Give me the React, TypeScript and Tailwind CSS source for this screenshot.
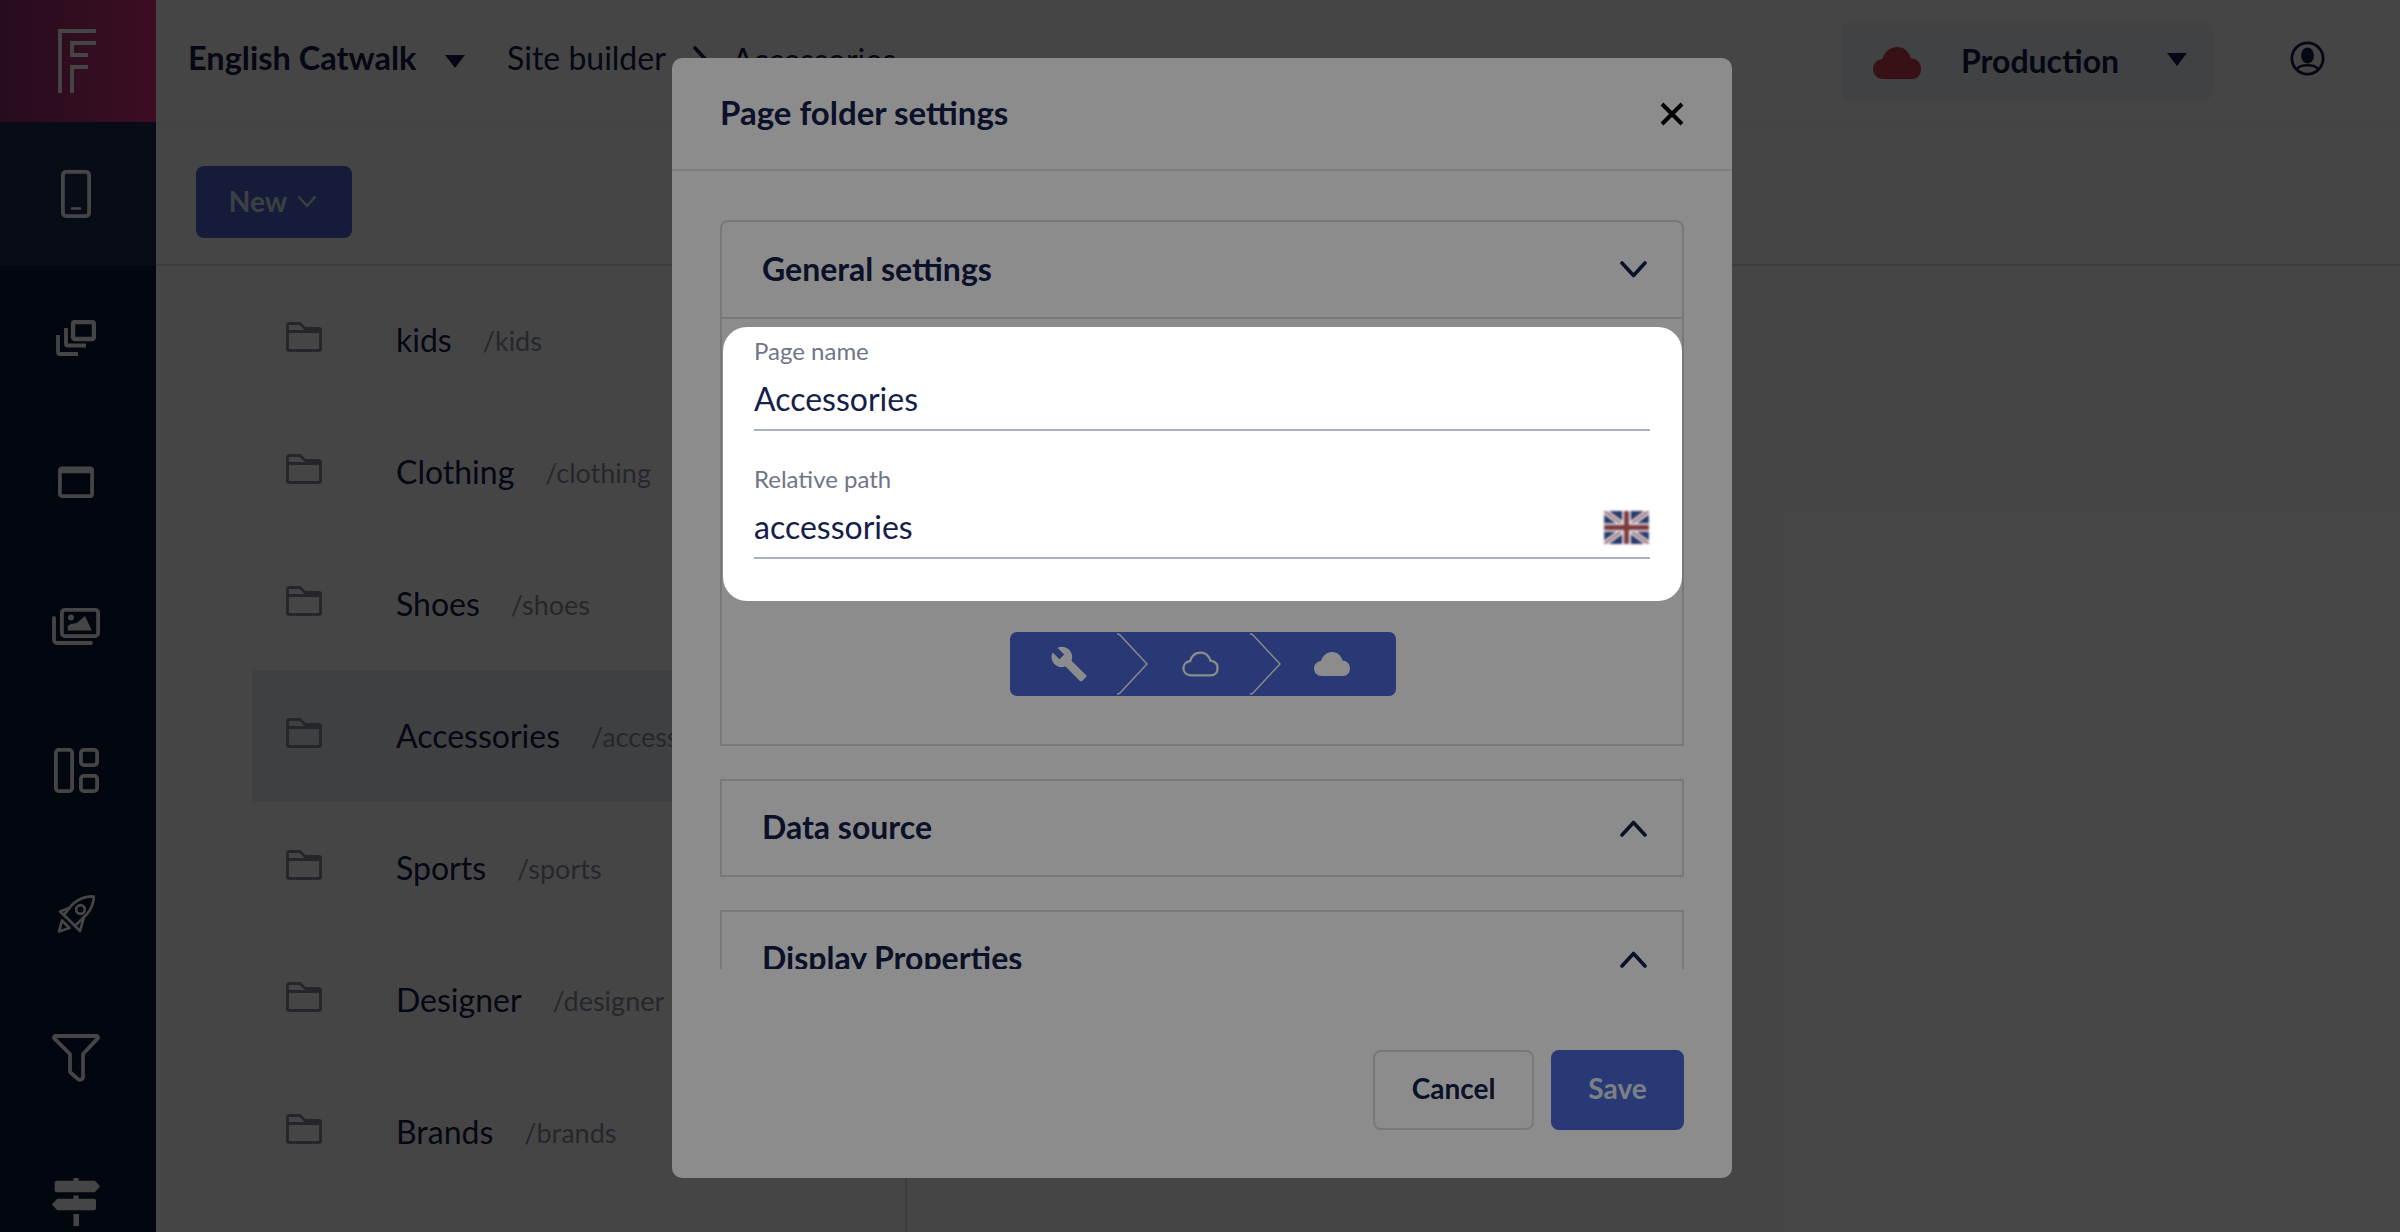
import React from "react";

const CLOUD = "M8 24 C3 24 0 20.5 0 16.5 C0 12.5 3 9.5 7 9 C8.5 4 12.5 0 18 0 C23.5 0 27 3.5 28.5 8.5 C33 9 36 12 36 16.5 C36 21 33 24 29 24 Z";

function Triangle({ w, h, className }: { w: number; h: number; className?: string }) {
  return (
    <svg width={w} height={h} viewBox="0 0 20 14" className={className} preserveAspectRatio="none">
      <path d="M0 0 H20 L10 14 Z" fill="#14204a" />
    </svg>
  );
}

function Folder() {
  return (
    <svg width="36" height="30" viewBox="0 0 36 30" fill="none" stroke="#858aa3" strokeWidth="2.8" strokeLinejoin="round" className="shrink-0">
      <path d="M1.5 27 V3 a1.5 1.5 0 0 1 1.5 -1.5 H14 L19 6.5 H33 a1.5 1.5 0 0 1 1.5 1.5 V27 a1.5 1.5 0 0 1 -1.5 1.5 H3 a1.5 1.5 0 0 1 -1.5 -1.5 Z" />
      <path d="M1.5 9.5 H34.5" />
    </svg>
  );
}

function Chev({ up }: { up?: boolean }) {
  return (
    <svg width="27" height="17" viewBox="0 0 27 17" fill="none" stroke="#14204a" strokeWidth="3.6" strokeLinecap="round" strokeLinejoin="round" className="shrink-0">
      <path d={up ? "M2 15 L13.5 2.5 L25 15" : "M2 2 L13.5 14.5 L25 2"} />
    </svg>
  );
}

function SideItem({ children, active }: { children: React.ReactNode; active?: boolean }) {
  return <div className={`h-[144px] shrink-0 flex items-center justify-center pr-[4px] ${active ? "bg-[#1d2c57]" : ""}`}>{children}</div>;
}

function Sidebar() {
  const s = { fill: "none", stroke: "#fff", strokeWidth: 3.8, strokeLinejoin: "round" as const, strokeLinecap: "round" as const };
  return (
    <aside className="w-[156px] shrink-0 h-[1232px] bg-[#081637] flex flex-col overflow-hidden">
      <div className="h-[122px] shrink-0 flex items-center justify-center pr-[3px] bg-gradient-to-r from-[#912c6d] to-[#da337f]">
        <svg width="38" height="64" viewBox="0 0 38 64" fill="none" stroke="#fff" strokeWidth="3.8">
          <path d="M2 64 V2 H38" />
          <path d="M38 14 H14 V26 H30" />
          <path d="M30 38 H14 V64" />
        </svg>
      </div>
      <SideItem active>
        <svg width="30" height="48" viewBox="0 0 30 48" {...s}>
          <rect x="1.9" y="1.9" width="26.2" height="44.2" rx="3" />
          <path d="M11 38.5 H19" strokeWidth="2.6" />
        </svg>
      </SideItem>
      <SideItem>
        <svg width="40" height="36" viewBox="0 0 40 36" {...s} strokeLinecap="butt">
          <rect x="17" y="2" width="21" height="17" rx="2" strokeWidth="4.4" />
          <path d="M10 8 V24 a1.5 1.5 0 0 0 1.5 1.5 H30" />
          <path d="M2 15 V32 a2 2 0 0 0 2 2 H22" />
        </svg>
      </SideItem>
      <SideItem>
        <svg width="36" height="32" viewBox="0 0 36 32" {...s}>
          <rect x="1.9" y="2.4" width="32.2" height="27.7" rx="2" />
          <path d="M2 5 H34" strokeWidth="4.4" />
        </svg>
      </SideItem>
      <SideItem>
        <svg width="48" height="37" viewBox="0 0 48 37" {...s}>
          <rect x="9.9" y="1.9" width="36.2" height="26.2" rx="3" />
          <path d="M2 10 V32 a3 3 0 0 0 3 3 H39" />
          <circle cx="19" cy="9.5" r="3" fill="#fff" stroke="none" />
          <path d="M15.7 22.5 V18 L19 16 L24.7 15 L33 8 L39.7 22.5 Z" fill="#fff" stroke="none" />
        </svg>
      </SideItem>
      <SideItem>
        <svg width="45" height="45" viewBox="0 0 45 45" {...s}>
          <rect x="1.9" y="1.9" width="16.2" height="41.2" rx="3" />
          <rect x="26.9" y="1.9" width="16.2" height="15.2" rx="3" />
          <rect x="26.9" y="27.9" width="16.2" height="15.2" rx="3" />
        </svg>
      </SideItem>
      <SideItem>
        <svg width="38" height="38" viewBox="0 0 38 38" {...s} strokeWidth="2.7">
          <path d="M36.5 1.5 C36.5 1.5 24 0 14 11 L7 20 L18 31 L27 22 C38 12 36.5 1.5 36.5 1.5 Z" />
          <circle cx="23.5" cy="14.5" r="4.3" />
          <path d="M12 13 L3 16.5 L8 21" />
          <path d="M27 22 L23 36 L17 30" />
          <path d="M5 25.5 L2 36.5 L12.5 33 Z" />
        </svg>
      </SideItem>
      <SideItem>
        <svg width="48" height="48" viewBox="0 0 48 48" {...s}>
          <path d="M3.5 2 H44.5 a1.5 1.5 0 0 1 1 2.6 L31 20 V43 a3 3 0 0 1 -5 2 L19 39 a3 3 0 0 1 -1 -2 V20 L2.5 4.6 a1.5 1.5 0 0 1 1 -2.6 Z" />
        </svg>
      </SideItem>
      <SideItem>
        <svg width="48" height="48" viewBox="0 0 48 48" fill="#fff">
          <path d="M21.5 0 h5 v2.7 H42 a2 2 0 0 1 1.5 .6 L48 8.5 L43.5 13.6 a2 2 0 0 1 -1.5 .7 H4.7 a2 2 0 0 1 -2 -2 V4.7 a2 2 0 0 1 2 -2 H21.5 Z" />
          <path d="M21.5 17.5 h5 v3.2 H42 a2 2 0 0 1 2 2 V30.3 a2 2 0 0 1 -2 2 H6 a2 2 0 0 1 -1.5 -.7 L0 26.5 L4.5 21.4 a2 2 0 0 1 1.5 -.7 H21.5 Z" />
          <rect x="21.5" y="36" width="5.5" height="12" />
        </svg>
      </SideItem>
    </aside>
  );
}

function Header() {
  return (
    <header className="h-[122px] shrink-0 flex items-center pl-[32px] pr-[75px] bg-white text-[#14204a]">
      <span className="text-[32.5px] font-bold w-[231px] whitespace-nowrap -mt-[6px]">English Catwalk</span>
      <Triangle w={20} h={13} className="ml-[26px]" />
      <span className="ml-[42px] text-[32px] w-[160px] whitespace-nowrap -mt-[6px]">Site builder</span>
      <svg width="16" height="30" viewBox="0 0 16 30" fill="none" stroke="#14204a" strokeWidth="3.6" strokeLinecap="round" className="ml-[26px]">
        <path d="M2 2 L14 15 L2 28" />
      </svg>
      <span className="ml-[23px] text-[32px] whitespace-nowrap -mt-[2px]">Accessories</span>
      <div className="ml-auto w-[372px] h-[80px] rounded-[10px] bg-[#ecf0f5] flex items-center pl-[32px]">
        <svg width="48" height="32" viewBox="0 0 36 24" className="mt-[3px]"><path d={CLOUD} fill="#c8404f" /></svg>
        <span className="ml-[40px] text-[32px] font-bold whitespace-nowrap w-[156px]">Production</span>
        <Triangle w={20} h={13} className="ml-[50px] -mt-[3px]" />
      </div>
      <svg width="35" height="35" viewBox="0 0 35 35" className="ml-[77px] -mt-[5px]" fill="none" stroke="#14204a" strokeWidth="2.8">
        <circle cx="17.5" cy="17.5" r="15.6" />
        <ellipse cx="17.5" cy="14.5" rx="6.4" ry="8" fill="#14204a" stroke="none" />
        <path d="M7 28 C10 23 25 23 28 28" strokeWidth="2.6" />
      </svg>
    </header>
  );
}

const rows = [
  ["kids", "/kids"],
  ["Clothing", "/clothing"],
  ["Shoes", "/shoes"],
  ["Accessories", "/accessories"],
  ["Sports", "/sports"],
  ["Designer", "/designer"],
  ["Brands", "/brands"],
];

function Tree() {
  return (
    <div className="flex-1 flex min-h-0">
      <div className="w-[751px] border-r-2 border-[#d9dae2] pl-[96px] pt-[8px] overflow-hidden">
        {rows.map(([name, path], i) => (
          <div key={name} className={`h-[132px] flex items-center pl-[34px] rounded-[4px] ${i === 3 ? "bg-[#e9ebf0]" : ""}`}>
            <div className="-mt-[6px]"><Folder /></div>
            <span className="ml-[74px] text-[32px] text-[#14204a] whitespace-nowrap -mt-[1px]">{name}</span>
            <span className="ml-[31px] text-[27px] text-[#8a90a6] whitespace-nowrap mt-[2px]">{path}</span>
          </div>
        ))}
      </div>
    </div>
  );
}

function AccHead({ title, up, border }: { title: string; up?: boolean; border?: boolean }) {
  return (
    <div className={`${border ? "h-[97px] border-b-2 border-[#d9dae2]" : "h-[94px]"} shrink-0 flex items-center justify-between pl-[40px] pr-[35px]`}>
      <span className="text-[32px] font-bold text-[#14204a] whitespace-nowrap -mt-[2px]">{title}</span>
      <Chev up={up} />
    </div>
  );
}

function Field({ label, value, flag, className }: { label: string; value: string; flag?: boolean; className?: string }) {
  return (
    <div className={className}>
      <div className="text-[24px] leading-[28px] text-[#6f7588]">{label}</div>
      <div className="h-[66px] border-b-2 border-[#aab2c2] pt-[11px] flex justify-between items-start">
        <span className="text-[32px] leading-[46px] text-[#14204a]">{value}</span>
        {flag && (
          <svg width="45" height="33" viewBox="0 0 46 34" className="mt-[7px] mr-[1px] blur-[0.9px]">
            <rect width="46" height="34" fill="#2a3768" />
            <path d="M0 0 L46 34 M46 0 L0 34" stroke="#dcdadf" strokeWidth="6" />
            <path d="M0 0 L46 34 M46 0 L0 34" stroke="#a0666a" strokeWidth="2" />
            <path d="M23 0 V34 M0 17 H46" stroke="#e8e6ea" strokeWidth="9" />
            <path d="M23 0 V34 M0 17 H46" stroke="#7c3a3c" strokeWidth="5" />
          </svg>
        )}
      </div>
    </div>
  );
}

function Stepper() {
  return (
    <div className="self-center ml-[1px] mt-[31px] w-[386px] h-[64px] rounded-[7px] bg-[#4c69d5] flex items-center relative">
      <svg width="38" height="38" viewBox="0 0 24 24" fill="#fff" className="absolute left-[40px] top-[13px]">
        <path d="M22.7 19l-9.1-9.1c.9-2.3.4-5-1.5-6.9-2-2-5-2.4-7.4-1.3L9 6 6 9 1.6 4.7C.4 7.1.9 10.1 2.9 12.1c1.9 1.9 4.6 2.4 6.9 1.5l9.1 9.1c.4.4 1 .4 1.4 0l2.3-2.3c.5-.4.5-1.1.1-1.4z" />
      </svg>
      <svg width="34" height="62" viewBox="0 0 34 62" fill="none" stroke="#fff" strokeWidth="1.4" className="absolute left-[106px] top-[1px]">
        <path d="M1 1 Q3 1 4 2 L31 31 L4 60 Q3 61 1 61" />
      </svg>
      <svg width="37" height="26" viewBox="-1.5 -1.5 39 27" fill="none" stroke="#fff" strokeWidth="2.4" className="absolute left-[172px] top-[19px]">
        <path d={CLOUD} />
      </svg>
      <svg width="34" height="62" viewBox="0 0 34 62" fill="none" stroke="#fff" strokeWidth="1.4" className="absolute left-[239px] top-[1px]">
        <path d="M1 1 Q3 1 4 2 L31 31 L4 60 Q3 61 1 61" />
      </svg>
      <svg width="36" height="24" viewBox="0 0 36 24" className="absolute left-[304px] top-[20px]">
        <path d={CLOUD} fill="#fff" />
      </svg>
    </div>
  );
}

function Modal() {
  return (
    <div className="absolute left-[672px] top-[58px] w-[1060px] h-[1120px] rounded-[10px] bg-white flex flex-col">
      <div className="h-[113px] shrink-0 border-b-2 border-[#e3e4ea] flex items-center justify-between pl-[48px] pr-[48px]">
        <span className="text-[33px] font-bold text-[#14204a] whitespace-nowrap -mt-[2px]">Page folder settings</span>
        <svg width="24" height="24" viewBox="0 0 24 24" fill="none" stroke="#000" strokeWidth="4">
          <path d="M2 2 L22 22 M22 2 L2 22" />
        </svg>
      </div>
      <div className="h-[798px] shrink-0 overflow-hidden px-[48px] pt-[49px]">
        <div className="h-[526px] border-2 border-[#d9dae2] rounded-t-[8px] flex flex-col">
          <AccHead title="General settings" border />
          <div className="relative z-30 mt-[8px] ml-[1px] h-[274px] bg-white rounded-[24px] pl-[31px] pr-[32px] pt-[10px]">
            <Field label="Page name" value="Accessories" />
            <Field label="Relative path" value="accessories" flag className="mt-[34px]" />
          </div>
          <Stepper />
        </div>
        <div className="mt-[33px] border-2 border-[#d9dae2]"><AccHead title="Data source" up /></div>
        <div className="mt-[33px] border-2 border-[#d9dae2]"><AccHead title="Display Properties" up /></div>
      </div>
      <div className="flex-1 flex justify-end items-start gap-[17px] pt-[81px] pr-[48px]">
        <button className="w-[161px] h-[80px] rounded-[8px] border-2 border-[#d9dae2] text-[28px] font-bold text-[#14204a] pb-[4px]">Cancel</button>
        <button className="w-[133px] h-[80px] rounded-[8px] bg-[#4c69d5] text-[28px] font-bold text-[#e4e8f6] pb-[4px]">Save</button>
      </div>
    </div>
  );
}

export default function App() {
  return (
    <div className="relative w-[2400px] h-[1232px] overflow-hidden bg-white flex font-['Lato','Noto_Sans',sans-serif]">
      <Sidebar />
      <main className="flex-1 flex flex-col min-w-0">
        <Header />
        <div className="h-[144px] shrink-0 border-b-2 border-t border-[#d9dae2] border-t-[#f2f2f2] pl-[40px] pt-[43px]">
          <button className="w-[156px] h-[72px] rounded-[8px] bg-[#4a69d5] text-[#e4e8f6] text-[28px] font-bold flex items-center justify-center gap-[10px] pb-[2px] pr-[2px]">
            New
            <svg width="20" height="13" viewBox="0 0 20 13" fill="none" stroke="#e4e8f6" strokeWidth="2.2" strokeLinecap="round"><path d="M2 2 L10 11 L18 2" /></svg>
          </button>
        </div>
        <Tree />
      </main>
      <div className="absolute inset-0 bg-black/50" />
      <Modal />
      <div className="absolute inset-0 z-20 bg-black/45" />
    </div>
  );
}
